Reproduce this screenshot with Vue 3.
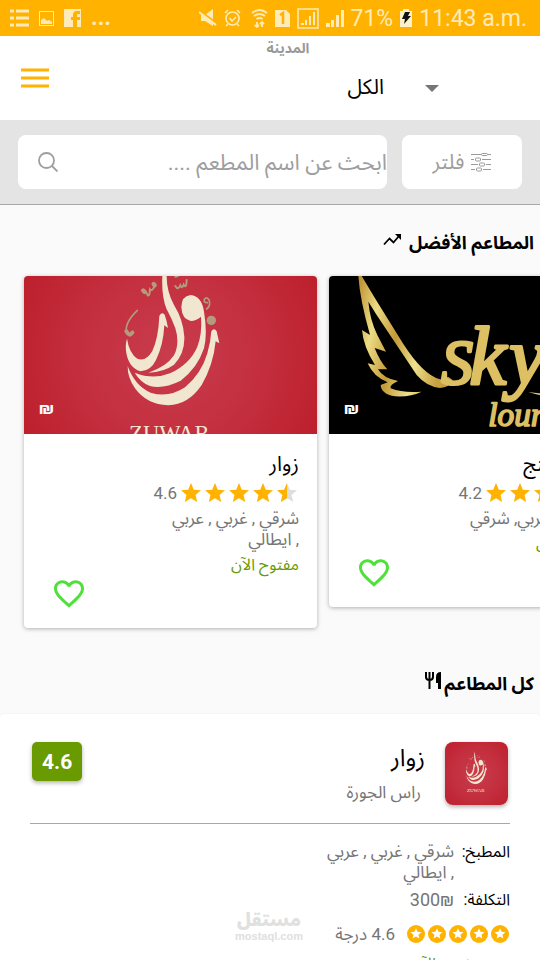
<template>
  <div class="app" dir="rtl">
    <svg class="defs" aria-hidden="true">
      <defs>
        <g id="zuwar-mark">
          <g fill="#f1e6cf">
            <path d="M421 -42 Q431 -10 440 18 Q440 65 462 105 Q490 150 493 200 Q495 250 462 284 Q432 306 385 308 Q440 290 462 256 Q480 220 466 175 Q455 145 440 118 Q424 80 427 18 Z" />
            <path d="M418 138 Q424 124 434 134 Q440 150 444 174 L433 166 Q430 225 408 270 Q392 303 362 304 Q328 296 319 250 Q315 225 321 206 Q328 250 352 266 Q378 276 397 243 Q415 205 418 138 Z" />
            <path d="M484 112 Q484 78 512 75 Q545 78 552 125 Q563 190 552 235 Q532 295 482 332 Q430 358 390 348 Q362 338 344 308 Q400 330 450 310 Q510 282 532 230 Q547 190 543 140 Q530 152 512 153 Q486 148 484 112 Z" />
            <path d="M574 184 Q582 172 590 184 L598 220 L587 214 Q580 285 545 345 Q505 404 445 406 Q380 404 345 355 Q322 322 323 288 Q345 348 392 368 Q445 385 495 352 Q545 310 562 250 Q572 215 574 184 Z" />
          </g>
          <g fill="none" stroke="#b39b7c" stroke-linecap="round">
            <path d="M352 121 Q312 160 320 188 Q331 208 338 184" stroke-width="5" />
            <path d="M319 184 Q328 200 337 188" stroke-width="12" />
            <path d="M366 60 Q376 58 382 74 Q388 84 390 58 Q398 66 406 42" stroke-width="6" />
            <path d="M370 62 L374 66 M401 42 L404 46" stroke-width="13" />
            <path d="M466 48 Q474 62 481 46 Q486 58 491 44 Q499 58 500 30 M466 20 L474 18" stroke-width="6" />
            <path d="M562 98 Q550 98 553 88 Q562 78 568 92 Q572 108 560 117" stroke-width="5" />
          </g>
          <circle cx="574" cy="151" r="14" fill="#b39b7c" />
          <text x="448" y="512" text-anchor="middle" font-family="'Liberation Serif', serif" font-size="68" fill="#f1e6cf">ZUWAR</text>
        </g>
        <linearGradient id="gold" x1="0" y1="0" x2="1" y2="0.3">
          <stop offset="0" stop-color="#b98a2b" />
          <stop offset="0.25" stop-color="#ecdc84" />
          <stop offset="0.5" stop-color="#c49a38" />
          <stop offset="0.75" stop-color="#eee08c" />
          <stop offset="1" stop-color="#c9a040" />
        </linearGradient>
      </defs>
    </svg>

    <!-- Status bar -->
    <div class="status-bar" dir="ltr">
      <div class="status-group">
        <svg width="19" height="18" viewBox="0 0 19 18">
          <path d="M0 2h4M6 2h13M0 9h4M6 9h13M0 16h4M6 16h13" stroke="currentColor" stroke-width="3" />
        </svg>
        <svg width="15" height="15" viewBox="0 0 15 15">
          <rect x="0.5" y="0.5" width="14" height="14" fill="none" stroke="currentColor" />
          <path d="M2 13V9l3-2 3 3 2-1 3 2v2z" fill="currentColor" />
        </svg>
        <svg width="17" height="18" viewBox="0 0 17 18">
          <path d="M0 0h17v18h-4v-7h3V8h-3V6q0-1 1-1h2V2h-3q-4 0-4 4v2H7v3h2v7H0z" fill="currentColor" />
        </svg>
        <span class="dots">...</span>
      </div>
      <div class="status-group right">
        <svg width="18" height="18" viewBox="0 0 18 18">
          <path d="M2 6h4l8-6v17l-8-5H2z" fill="currentColor" />
          <path d="M0 1l17 13" stroke="#ffb300" stroke-width="2" />
          <path d="M0 3l17 13" stroke="currentColor" stroke-width="2" />
        </svg>
        <svg width="17" height="18" viewBox="0 0 17 18" fill="none" stroke="currentColor" stroke-width="1.6">
          <circle cx="8.500" cy="9.500" r="6.500" />
          <path d="M5.500 9l2.500 3 4-4M1 4l3-3M13 1l3 3M4 15l-2 2M13 15l2 2" />
        </svg>
        <svg class="s-wifi" width="17" height="19" viewBox="0 0 17 19" fill="none" stroke="currentColor" stroke-width="1.800">
          <path d="M1 4q7.500-6 15 0M3 7q5.500-4 11 0M5.500 10q3-2 6 0M6 13v5M3.500 16L6 18l2-2M11 18v-5M9 15l2-2 2 2" />
        </svg>
        <svg width="15" height="17" viewBox="0 0 15 17">
          <path d="M0 0h11l4 4v13H0z" fill="currentColor" />
          <path d="M5 5l3-2v11" fill="none" stroke="#ffb300" stroke-width="2.500" />
        </svg>
        <svg width="22" height="21" viewBox="0 0 22 21">
          <rect x="1" y="1" width="20" height="19" fill="none" stroke="currentColor" stroke-width="1.500" />
          <path d="M4 17v-2h3v2zM8 17v-5h2v5zM12 17V8h2v9zM16 17V4h2v13z" fill="currentColor" />
        </svg>
        <svg width="18" height="17" viewBox="0 0 18 17">
          <path d="M0 17v-4h4v4zM5 17v-7h3v7zM10 17V5h3v12zM15 17V0h3v17z" fill="currentColor" />
        </svg>
        <span>71%</span>
        <svg width="12" height="18" viewBox="0 0 12 18">
          <path d="M0 2h3V0h6v2h3v16H0z" fill="#fff0cc" />
          <path d="M5 3h5L8 7h3l-7 8 1-5H2z" fill="#111" />
        </svg>
        <span>11:43 a.m.</span>
      </div>
    </div>

    <!-- Header with the city picker -->
    <header class="top-bar" dir="ltr">
      <button class="menu-btn" aria-label="القائمة">
        <svg width="28" height="20" viewBox="0 0 28 20">
          <path d="M0 2h28M0 10h28M0 18h28" stroke="#ffb300" stroke-width="3" />
        </svg>
      </button>
      <div class="city">
        <label for="city">المدينة</label>
        <div class="city-select">
          <select id="city" v-model="city">
            <option>الكل</option>
          </select>
          <svg class="caret" width="14" height="7" viewBox="0 0 14 7">
            <path d="M0 0h14L7 7z" fill="#757575" />
          </svg>
        </div>
      </div>
    </header>

    <!-- Search -->
    <div class="search-bar">
      <button class="filter-btn">
        <svg width="20" height="20" viewBox="0 0 20 20" fill="none" stroke="#9a9a9a">
          <path d="M0 2.500h10M17 2.500h3M0 7.500h3M11 7.500h9M0 12.500h7M15 12.500h5M0 17.500h4M12 17.500h8" />
          <rect x="10.500" y="1.500" width="6" height="2" rx="1" />
          <rect x="4.500" y="6" width="5" height="3" rx="1" />
          <rect x="8.500" y="11" width="5" height="3" rx="1" />
          <rect x="5.500" y="16" width="5" height="3" rx="1" />
        </svg>
        <span>فلتر</span>
      </button>
      <div class="search-box">
        <input v-model="query" type="text" aria-label="بحث" placeholder="ابحث عن اسم المطعم ...." />
        <svg width="20" height="20" viewBox="0 0 20 20" fill="none" stroke="#9e9e9e" stroke-width="1.800">
          <circle cx="8.500" cy="8.500" r="7.500" />
          <path d="M14 14l5.500 5.500" />
        </svg>
      </div>
    </div>

    <main class="content">
      <h2 class="section-title">
        <span>المطاعم الأفضل</span>
        <svg class="trend" width="18" height="12" viewBox="0 0 18 12">
          <path d="M1 10.500l5.500-6 4 4L16 2" fill="none" stroke="#000" stroke-width="1.800" />
          <path d="M12 0h6v6z" fill="#000" />
        </svg>
      </h2>

      <div class="carousel" dir="ltr">
        <article v-for="item in best" :key="item.name" class="best-card">
          <div class="cover" :class="item.cover">
            <svg v-if="item.cover === 'zuwar'" viewBox="12 18 879 474" preserveAspectRatio="xMidYMin slice">
              <use href="#zuwar-mark" />
            </svg>
            <svg v-else viewBox="27 18 879 474" preserveAspectRatio="xMidYMin slice">
              <path fill="url(#gold)" d="M115 18L125 18L165 85L250 222Q310 315 360 328Q375 330 384 320L398 330Q388 353 360 354Q320 350 290 315L170 135L145 95Q150 150 172 195L198 245L164 234Q180 275 202 298L174 298Q190 325 234 333Q208 345 212 355Q250 370 305 365Q270 382 225 379Q183 372 182 345L203 337Q160 320 143 280L165 285Q130 230 126 180L150 195Q120 90 115 18Z" />
              <text class="script" y="342">
                <tspan x="364" font-size="190">S</tspan><tspan x="448" font-size="250">k</tspan><tspan x="568" font-size="240">y</tspan>
              </text>
              <path fill="url(#gold)" d="M625 366Q700 380 800 340Q720 400 625 366Z" />
              <text class="script small" x="505" y="467">lounge</text>
            </svg>
            <span class="currency">₪</span>
          </div>
          <div class="best-body">
            <h3 dir="rtl">{{ item.name }}</h3>
            <div class="rating">
              <span>{{ item.rating }}</span>
              <svg v-for="n in 5" :key="n" width="20" height="20" viewBox="2 2 20 20">
                <path :d="star" :fill="n <= Math.floor(item.rating) ? '#ffb300' : '#dedede'" />
                <path v-if="n === 5" :d="halfStar" fill="#ffb300" />
              </svg>
            </div>
            <p class="kitchen" dir="rtl">{{ item.kitchen }}</p>
            <p class="open" dir="rtl">مفتوح الآن</p>
            <button class="like-btn" aria-label="أضف إلى المفضلة">
              <svg width="30" height="28" viewBox="2 3 20 18.350">
                <path :d="heart" fill="#4fe03a" />
              </svg>
            </button>
          </div>
        </article>
      </div>

      <h2 class="section-title all">
        <span>كل المطاعم</span>
        <svg class="fork" width="17" height="18" viewBox="0 0 17 18">
          <path d="M1 0v5q0 3 3.500 3T8 5V0M4.500 0v17" fill="none" stroke="#000" stroke-width="2" />
          <path d="M16 0v17h-3v-6h-2V5q0-5 5-5z" fill="#000" />
        </svg>
      </h2>

      <article class="place-card">
        <div class="place-head">
          <div class="thumb">
            <svg viewBox="30 -165 855 855"><use href="#zuwar-mark" /></svg>
          </div>
          <div class="place-name">
            <h3>زوار</h3>
            <p>راس الجورة</p>
          </div>
          <span class="score">4.6</span>
        </div>
        <dl class="details">
          <dt>المطبخ:</dt>
          <dd class="lines">{{ best[0].kitchen }}</dd>
          <dt>التكلفة:</dt>
          <dd class="cost"><bdo dir="ltr">300₪</bdo></dd>
        </dl>
        <div class="degree">
          <div class="badges">
            <svg v-for="n in 5" :key="n" width="18" height="18" viewBox="0 0 24 24">
              <circle cx="12" cy="12" r="12" fill="#ffb300" />
              <path :d="star" fill="#fff" transform="translate(3.200 2.800) scale(0.730)" />
            </svg>
          </div>
          <span>4.6 درجة</span>
        </div>
        <p class="open now">مفتوح الآن</p>
      </article>
    </main>

    <div class="watermark">
      <strong>مستقل</strong>
      <span>mostaql.com</span>
    </div>
  </div>
</template>

<script setup>
import { ref } from 'vue'

const city = ref('الكل')
const query = ref('')

const star = 'M12 17.270L18.180 21l-1.640-7.030L22 9.240l-7.190-.61L12 2 9.190 8.630 2 9.240l5.460 4.730L5.820 21z'
const halfStar = 'M12 17.270V2L9.190 8.630 2 9.240l5.460 4.730L5.820 21z'
const heart = 'M16.500 3c-1.740 0-3.410.81-4.500 2.090C10.910 3.810 9.240 3 7.500 3 4.420 3 2 5.420 2 8.500c0 3.780 3.400 6.860 8.550 11.540L12 21.350l1.450-1.320C18.600 15.360 22 12.280 22 8.500 22 5.420 19.580 3 16.500 3zm-4.400 15.550l-.1.100-.1-.1C7.140 14.240 4 11.390 4 8.500 4 6.500 5.500 5 7.500 5c1.540 0 3.040.99 3.570 2.360h1.870C13.460 5.990 14.960 5 16.500 5c2 0 3.500 1.500 3.500 3.500 0 2.890-3.140 5.740-7.900 10.050z'

const best = [
  { name: 'زوار', rating: 4.6, cover: 'zuwar', kitchen: 'شرقي , غربي , عربي\n, ايطالي' },
  { name: 'سكاي لنج', rating: 4.2, cover: 'sky', kitchen: 'ايطالي , غربي, شرقي' }
]
</script>

<style>
body {
  margin: 0;
  background: #fafafa;
}
</style>

<style scoped>
.app {
  position: relative;
  height: 100vh;
  display: flex;
  flex-direction: column;
  overflow: hidden;
  background: #fafafa;
  color: #000;
  font-family: Roboto, "Noto Sans Arabic", "Noto Sans", "DejaVu Sans", sans-serif;
}

.app * {
  box-sizing: border-box;
}

.defs {
  position: absolute;
  width: 0;
  height: 0;
}

h2,
h3,
p,
dl,
dd {
  margin: 0;
}

svg {
  display: block;
  flex-shrink: 0;
}

button {
  border: none;
  background: none;
  padding: 0;
  font-family: inherit;
  cursor: pointer;
}

.status-bar {
  flex-shrink: 0;
  height: 36px;
  padding: 0 13px 0 10px;
  display: flex;
  align-items: center;
  justify-content: space-between;
  background: #ffb300;
  color: #ffeab8;
  font-size: 23px;
}

.status-group {
  display: flex;
  align-items: center;
  gap: 10px;
}

.status-group.right {
  gap: 7px;
}

.s-wifi {
  margin-left: 3px;
}

.dots {
  font-weight: bold;
  line-height: 24px;
}

.top-bar {
  flex-shrink: 0;
  height: 84px;
  padding: 0 13px 0 21px;
  display: flex;
  align-items: center;
  background: #fff;
}

.city {
  flex: 1;
  align-self: stretch;
  display: flex;
  flex-direction: column;
  align-items: center;
}

.city label {
  line-height: 24px;
  font-size: 14px;
  font-weight: bold;
  color: #999;
}

.city-select {
  position: relative;
  align-self: flex-end;
  margin-right: 75px;
}

.city-select select {
  appearance: none;
  width: 180px;
  height: 54px;
  padding: 0 68px 0 0;
  border: none;
  background: none;
  color: #000;
  font-family: inherit;
  font-size: 21px;
  text-align: right;
  text-align-last: right;
}

.caret {
  position: absolute;
  right: 13px;
  top: 25px;
  pointer-events: none;
}

.search-bar {
  flex-shrink: 0;
  padding: 15px 18px;
  display: flex;
  gap: 15px;
  background: #e4e4e4;
  border-bottom: 1px solid #a8a8a8;
}

.filter-btn {
  width: 120px;
  height: 54px;
  display: flex;
  align-items: center;
  justify-content: center;
  gap: 7px;
  border-radius: 8px;
  background: #fff;
  color: #9e9e9e;
  font-size: 21px;
}

.search-box {
  flex: 1;
  height: 54px;
  display: flex;
  align-items: center;
  padding-left: 20px;
  border-radius: 8px;
  background: #fff;
}

.search-box input {
  flex: 1;
  min-width: 0;
  height: 54px;
  padding: 0;
  border: none;
  outline: none;
  background: none;
  font-family: inherit;
  font-size: 22px;
}

.search-box input::placeholder {
  color: #9e9e9e;
}

.content {
  flex: 1;
  min-height: 0;
  overflow: hidden;
}

.section-title {
  display: flex;
  align-items: center;
  gap: 8px;
  padding: 23px 6px 0;
  font-size: 18px;
  line-height: 30px;
}

.section-title.all {
  gap: 2px;
  padding-top: 28px;
}

.trend,
.fork {
  margin-bottom: 6px;
}

.carousel {
  display: flex;
  align-items: flex-start;
  gap: 12px;
  padding: 18px 24px 13px;
  overflow: hidden;
}

.best-card {
  flex: 0 0 293px;
  overflow: hidden;
  border-radius: 4px;
  background: #fff;
  box-shadow: 0 1px 4px rgba(0, 0, 0, 0.3);
}

.cover {
  position: relative;
  height: 158px;
  overflow: hidden;
}

.cover svg {
  width: 100%;
  height: 100%;
}

.zuwar,
.thumb {
  background: radial-gradient(circle, #c83c4c 0%, #c43040 50%, #bd1f2c 100%);
}

.sky {
  background: #000;
}

.script {
  fill: #dcc063;
  stroke: #dcc063;
  stroke-width: 9px;
  stroke-linejoin: round;
  font-family: "Liberation Serif", serif;
  font-style: italic;
}

.script.small {
  font-size: 100px;
  stroke-width: 5px;
}

.currency {
  position: absolute;
  left: 15px;
  bottom: 16px;
  color: #fff;
  font-size: 17px;
  font-weight: bold;
  line-height: 20px;
}

.best-body {
  padding: 16px 18px 20px;
  text-align: right;
}

.best-body h3 {
  font-size: 21px;
  font-weight: normal;
  line-height: 28px;
}

.rating {
  display: flex;
  justify-content: flex-end;
  align-items: center;
  gap: 4px;
  margin-top: 4px;
  padding-right: 2px;
  color: #757575;
  font-size: 17px;
  line-height: 22px;
}

.kitchen {
  margin-top: 4px;
  color: #757575;
  font-size: 17px;
  line-height: 21px;
  white-space: pre-line;
}

.open {
  margin-top: 4px;
  color: #699a00;
  font-size: 16px;
  line-height: 22px;
}

.like-btn {
  display: block;
  margin: 4px 0 0 12px;
}

.place-card {
  margin-top: 15px;
  padding: 28px 30px;
  border-radius: 4px;
  background: #fff;
  box-shadow: 0 0 2px rgba(0, 0, 0, 0.08);
}

.place-head {
  display: flex;
  align-items: flex-start;
  padding: 0 2px 18px;
  border-bottom: 1px solid #a8a8a8;
}

.thumb {
  width: 63px;
  height: 63px;
  overflow: hidden;
  border-radius: 8px;
  box-shadow: 0 2px 4px rgba(0, 0, 0, 0.3);
}

.place-name {
  flex: 1;
  padding-right: 20px;
}

.place-name h3 {
  font-size: 24px;
  font-weight: normal;
  line-height: 32px;
}

.place-name p {
  padding: 6px 4px 0 0;
  color: #757575;
  font-size: 17px;
  line-height: 24px;
}

.score {
  padding: 2px 10px 0;
  border-radius: 5px;
  background: #699a00;
  color: #fff;
  font-size: 21px;
  font-weight: bold;
  line-height: 37px;
  box-shadow: 0 2px 4px rgba(0, 0, 0, 0.3);
}

.details {
  display: grid;
  grid-template-columns: 46px 1fr;
  column-gap: 10px;
  row-gap: 6px;
  padding-top: 17px;
  font-size: 16px;
  line-height: 21px;
}

.details dt {
  white-space: nowrap;
}

.details dd {
  color: #757575;
}

.details .lines {
  font-size: 17px;
  white-space: pre-line;
}

.details .cost {
  font-size: 18px;
}

.degree {
  display: flex;
  align-items: center;
  gap: 12px;
  padding: 13px 1px 0;
  color: #757575;
  font-size: 17px;
  line-height: 22px;
}

.badges {
  display: flex;
  gap: 3px;
}

.open.now {
  padding: 4px 30px 0 0;
}

.watermark {
  position: absolute;
  left: 50%;
  bottom: 18px;
  width: 66px;
  margin-left: -34px;
  display: flex;
  flex-direction: column;
  align-items: center;
  color: #e0e0e0;
  font-weight: bold;
}

.watermark strong {
  font-size: 18px;
  line-height: 20px;
}

.watermark span {
  font-family: "Liberation Sans", sans-serif;
  font-size: 11px;
  line-height: 12px;
}
</style>
